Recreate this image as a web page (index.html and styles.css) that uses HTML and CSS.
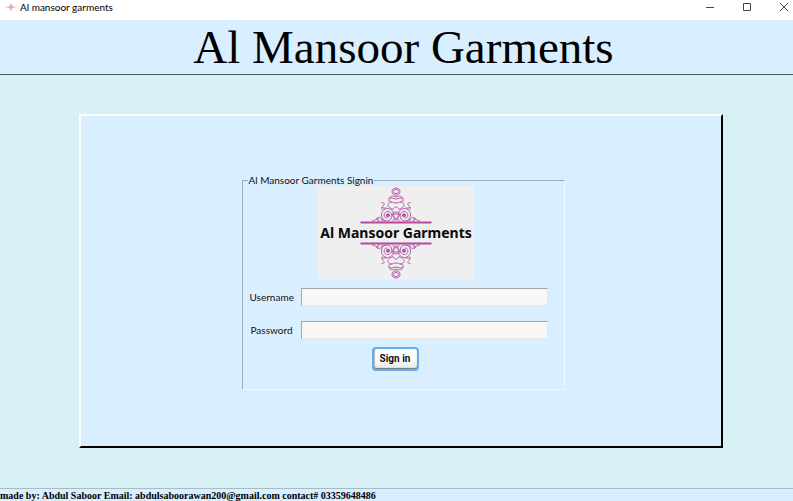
FILE: index.html
```html
<!DOCTYPE html>
<html lang="en">
<head>
<meta charset="utf-8">
<title>Al mansoor garments</title>
<link rel="stylesheet" href="styles.css">
</head>
<body>
<div class="titlebar">
  <svg class="app-icon" width="12" height="12" viewBox="0 0 12 12" aria-hidden="true">
    <path d="M0 6h12" stroke="#d8d0d8"/>
    <path d="M6 2l2 3 2 1-2 1-2 3-2-3-2-1 2-1z" fill="#e3bcdc"/>
    <path d="M4 6h4" stroke="#c79fc1"/>
  </svg>
  <span class="window-title">Al mansoor garments</span>
  <div class="window-buttons">
    <button type="button" aria-label="Minimize"><svg width="10" height="10" viewBox="0 0 10 10"><path d="M1 5.500h8"/></svg></button>
    <button type="button" aria-label="Maximize"><svg width="10" height="10" viewBox="0 0 10 10"><path d="M1.500 1.500h7v7h-7z"/></svg></button>
    <button type="button" aria-label="Close"><svg width="10" height="10" viewBox="0 0 10 10"><path d="M1 1l8 8M9 1l-8 8"/></svg></button>
  </div>
</div>
<header class="banner"><h1>Al Mansoor Garments</h1></header>
<main class="desk">
  <section class="panel">
    <form class="signin">
      <fieldset>
        <legend>Al Mansoor Garments Signin</legend>
        <svg class="logo" width="157" height="94" viewBox="0 0 157 94" role="img" aria-label="Al Mansoor Garments">
          <defs>
            <g id="half">
              <path d="M0-34.500c-2.400 0-4 1.500-4 3.600S-2.400-27.500 0-27.500M0-33c-1.600 0-2.500.9-2.500 2.100S-1.600-29 0-29"/>
              <path d="M0-25.500c-3-1.500-6-1-7 1.500-.8 2.300 1 4 3 3.500M-7-24c2-1 4 0 7 .5M-4-20.500c-2 0-3.500.5-4 2.500M0-19.500c-2 0-3-.7-4-1"/>
              <path d="M-14.500-20c1.500-.5 3 .7 2.500 2s-2 1-1.500 2.500 2.500 1.500 4 .5M-14-15.500c-.7 1-.2 2.500 1.200 2.500M-8-18c-.5 3 3 3.500 5 5M-3-13c1-2 2-2.500 3-2.500"/>
              <path d="M-1.500-3.500c-1-1.500-.5-3-.8-5C-3-12-5.500-14-8.500-14c-3.500 0-6 3-6 6.500s2.500 6 5.500 6c2.800 0 4.800-2.200 4.800-5.200 0-2.500-1.600-4.300-4-4.300-2.200 0-3.700 1.500-3.700 3.500s1.400 3.200 3 3"/>
              <circle cx="-8" cy="-7.200" r="1.600" class="bead"/>
              <path d="M0-10.500c-1.500 0-3 .8-3.500 2.500M0-8.500h-3.500c0 2.500 1.500 4 3.500 4.500M0-2.500c-1.500-1-3 0-4 1.500"/>
              <path d="M-14-1c0-3.500-2.500-5-4-3.500-1.200 1.300 0 3 1.500 2.500M-17-1c-1-2.500-4-3-4.500-.5M-20-3c.3-1.500 1.500-2 2.500-1.500M-21.500-1.500c-1-1-2.500-.5-2.500.5M-11-1c-.5-1.500-2-2-3-1"/>
            </g>
            <g id="crest">
              <use href="#half"/>
              <use href="#half" transform="scale(-1 1)"/>
              <path d="M-35.500 0h71" class="rule"/>
            </g>
          </defs>
          <g class="ornament">
            <use href="#crest" transform="translate(79 36.500)"/>
            <use href="#crest" transform="translate(79 57.500) scale(1 -1)"/>
          </g>
          <text x="79" y="52" text-anchor="middle">Al Mansoor Garments</text>
        </svg>
        <div class="fields">
          <label for="username">Username</label>
          <input id="username" type="text">
          <label for="password">Password</label>
          <input id="password" type="password">
        </div>
        <button class="submit" type="submit">Sign in</button>
      </fieldset>
    </form>
  </section>
</main>
<footer class="credits">made by: Abdul Saboor Email: abdulsaboorawan200@gmail.com contact# 03359648486</footer>
</body>
</html>
```
FILE: styles.css
```css
* { box-sizing: border-box; }

body {
  margin: 0;
  min-height: 100vh;
  display: flex;
  flex-direction: column;
  background: #d7f0f4;
  color: #000;
  font-family: Lato, sans-serif;
  overflow: hidden;
}

.titlebar {
  display: flex;
  align-items: center;
  height: 20px;
  padding: 0 4px 7px 5px;
  background: #fff;
}

.window-title {
  margin-left: 3px;
  font: 10px/14px Lato, sans-serif;
}

.window-buttons {
  display: flex;
  gap: 27px;
  margin-left: auto;
}

.window-buttons button {
  display: flex;
  padding: 0;
  border: 0;
  background: none;
}

.window-buttons path {
  fill: none;
  stroke: #444;
}

.banner {
  height: 55px;
  padding-left: 14px;
  background: #d9eefe;
  border-bottom: 1px solid #4d5c63;
  text-align: center;
}

.banner h1 {
  margin: 0;
  font: 47px/54px "Liberation Serif", serif;
}

.desk {
  flex: 1;
  display: flex;
  padding: 39px 70px 40px 79px;
}

.panel {
  flex: 1;
  display: flex;
  justify-content: center;
  align-items: center;
  padding: 2px 0 0 4px;
  background: #d9eefe;
  border: 2px solid;
  border-color: #fbfeff #000 #000 #fbfeff;
}

.signin { width: 323px; }

fieldset {
  display: flex;
  flex-direction: column;
  align-items: center;
  min-width: 0;
  margin: 0;
  padding: 0 16px 18px 7px;
  border: 1px solid;
  border-color: #9aabb9 #f2faff #f2faff #9aabb9;
}

legend {
  margin-left: -2px;
  padding: 0 1px;
  font: 10px/12px Lato, sans-serif;
  color: #111;
}

.logo {
  display: block;
  margin-right: 7px;
  background: #efefef;
}

.ornament {
  fill: none;
  stroke: #b65ca7;
  stroke-width: 1;
}

.bead { fill: #b0519f; }

.rule {
  stroke: #b5489f;
  stroke-width: 2;
}

.logo text {
  font: bold 14px "Noto Sans", sans-serif;
  fill: #0a0a0a;
}

.fields {
  display: grid;
  grid-template-columns: 44px 1fr;
  gap: 15px 7px;
  align-self: stretch;
  align-items: center;
  margin-top: 8px;
}

.fields label {
  font-size: 10px;
  line-height: 18px;
  text-align: center;
  color: #111;
}

.fields input {
  width: 100%;
  height: 18px;
  padding: 0 3px;
  border: 1px solid;
  border-color: #a5a8aa #e8e8e8 #e8e8e8 #a5a8aa;
  background: #f8f7f5;
  font: 10px Lato, sans-serif;
}

.submit {
  width: 47px;
  height: 24px;
  margin-top: 8px;
  margin-right: 7px;
  padding: 0;
  border: 2px solid #61aef5;
  border-radius: 4px;
  background: linear-gradient(#fff 55%, #e4e4e4);
  box-shadow: inset 0 -1px 1px #777, inset 1px 0 1px #bbb;
  color: #111;
  font: bold 10px/18px Roboto, sans-serif;
}

.credits {
  height: 13px;
  border-top: 1px solid #a9bac8;
  background: #d9eefe;
  font: bold 10px/13px "Liberation Serif", serif;
  white-space: nowrap;
}
```
